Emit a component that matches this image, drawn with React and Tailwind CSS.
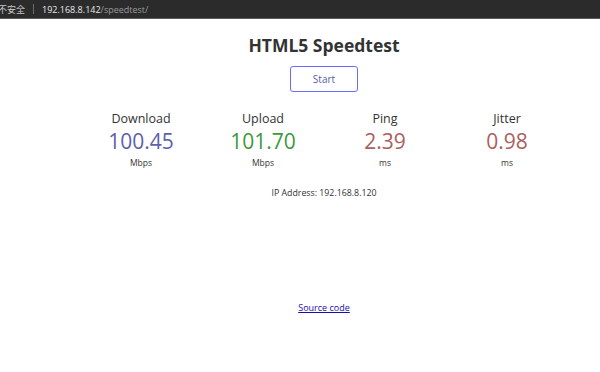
const FONT = { fontFamily: '"Open Sans", "Noto Sans CJK SC", sans-serif' };

const metrics = [
  { label: 'Download', value: '100.45', unit: 'Mbps', color: 'text-[#6060aa]' },
  { label: 'Upload', value: '101.70', unit: 'Mbps', color: 'text-[#3c9a3c]' },
  { label: 'Ping', value: '2.39', unit: 'ms', color: 'text-[#aa6060]' },
  { label: 'Jitter', value: '0.98', unit: 'ms', color: 'text-[#aa6060]' },
];

function AddressBar() {
  return (
    <div className="flex h-[19px] items-center border-b border-[#5a5a5a] bg-[#2b2b2b] text-[9px] leading-none">
      <span className="-ml-[2px] text-[#c8c8c8]">不安全</span>
      <span className="mx-[8px] h-[10px] w-px bg-[#6a6a6a]" />
      <span className="text-[#e8e8e8]">192.168.8.142</span>
      <span className="text-[#9a9a9a]">/speedtest/</span>
    </div>
  );
}

export default function App() {
  return (
    <div className="h-[372px] w-[600px] overflow-hidden bg-white text-[#333]" style={FONT}>
      <AddressBar />
      <div className="flex flex-col items-center pl-[48px]">
        <h1 className="mt-[15px] text-[17.5px] font-bold leading-[22px] text-[#333]">HTML5 Speedtest</h1>
        <button className="mt-[10px] h-[26px] w-[68px] rounded-[3px] border border-[#6b6bff] text-[10px] text-[#5c5ca8]">
          Start
        </button>
        <div className="mt-[19px] flex">
          {metrics.map((m) => (
            <div key={m.label} className="flex w-[122px] flex-col items-center">
              <div className="text-[12.5px] leading-[16px] text-[#333]">{m.label}</div>
              <div className={`mt-[2px] text-[21px] leading-[24px] ${m.color}`}>{m.value}</div>
              <div className="mt-[4px] text-[8.5px] leading-[11px] text-[#333]">{m.unit}</div>
            </div>
          ))}
        </div>
        <div className="mt-[19px] text-[8.8px] leading-[12px] text-[#333]">IP Address: 192.168.8.120</div>
        <a href="#" className="mt-[102px] text-[9px] leading-[13px] text-[#1a0dab] underline">
          Source code
        </a>
      </div>
    </div>
  );
}
